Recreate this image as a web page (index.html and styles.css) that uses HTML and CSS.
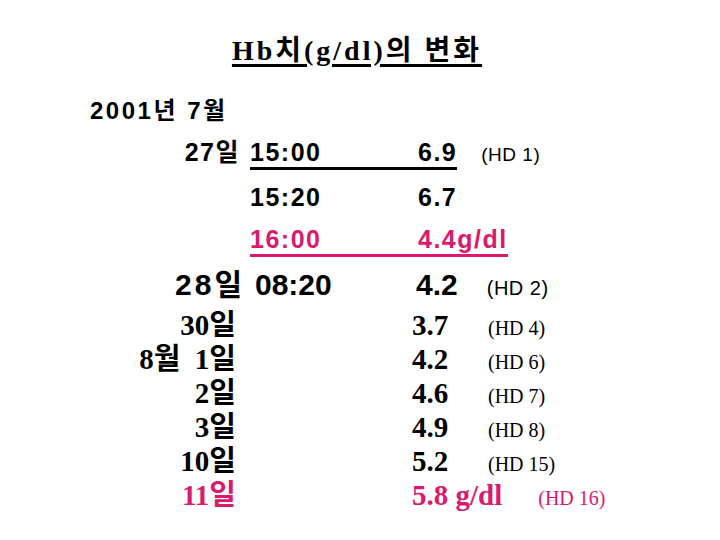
FILE: index.html
```html
<!DOCTYPE html>
<html>
<head>
<meta charset="UTF-8">
<title>Hb치의 변화</title>
<link rel="stylesheet" href="styles.css">
</head>
<body>

<div class="slide">

<h1 class="title"><span>Hb치(g/dl)의 변화</span></h1>

<!-- 7월 : 투석 당일 -->
<div class="sans">
  <div class="year">2001년 7월</div>

  <div class="row r1">
    <div class="date">27일</div>
    <div class="reading line">
      <span class="time">15:00</span>
      <span class="val">6.9</span>
    </div>
    <span class="hd">(HD 1)</span>
  </div>

  <div class="row r2">
    <div class="date">&nbsp;</div>
    <div class="reading">
      <span class="time">15:20</span>
      <span class="val">6.7</span>
    </div>
  </div>

  <div class="row r3 pink">
    <div class="date">&nbsp;</div>
    <div class="reading line">
      <span class="time">16:00</span>
      <span class="val">4.4g/dl</span>
    </div>
  </div>

  <div class="row big">
    <div class="date">28일</div>
    <div class="reading">
      <span class="time">08:20</span>
      <span class="val">4.2</span>
    </div>
    <span class="hd">(HD 2)</span>
  </div>
</div>

<!-- 이후 경과 -->
<div class="serif">
  <div class="row"><div class="date">30일</div><span class="val">3.7</span><span class="hd">(HD 4)</span></div>
  <div class="row"><div class="date">8월&nbsp; 1일</div><span class="val">4.2</span><span class="hd">(HD 6)</span></div>
  <div class="row"><div class="date">2일</div><span class="val">4.6</span><span class="hd">(HD 7)</span></div>
  <div class="row"><div class="date">3일</div><span class="val">4.9</span><span class="hd">(HD 8)</span></div>
  <div class="row"><div class="date">10일</div><span class="val">5.2</span><span class="hd">(HD 15)</span></div>
  <div class="row pink last"><div class="date">11일</div><span class="val">5.8 g/dl</span><span class="hd">(HD 16)</span></div>
</div>

</div>

</body>
</html>
```

FILE: styles.css
```css
body {
  margin: 0;
  background-color: #fff;
  color: #000;
}

.slide {
  width: 720px;
  height: 540px;
  box-sizing: border-box;
  padding-top: 34px;
}

.title {
  margin: 0;
  padding-right: 6px;
  text-align: center;
  font: bold 28px "Liberation Serif", "Noto Sans CJK KR", serif;
  letter-spacing: 3px;
  line-height: 34px;
}

.title span {
  text-decoration: underline;
  text-decoration-thickness: 3px;
  text-underline-offset: 4px;
}

.pink {
  color: #d91a6e;
}

/* upper block : Arial look, a bit wide */
.sans {
  margin-top: 22px;
  font-family: "Liberation Sans", "Noto Sans CJK KR", sans-serif;
  font-weight: bold;
}

.year {
  padding-left: 90px;
  font-size: 24px;
  letter-spacing: 2.5px;
  line-height: 41px;
}

.row {
  display: flex;
  align-items: baseline;
}

.sans .row {
  font-size: 25px;
  letter-spacing: 1.5px;
  height: 42px;
  line-height: 42px;
}

.sans .row.r1 {
  height: 45px;
}

.sans .date {
  width: 250px;
  padding-right: 10px;
  text-align: right;
  box-sizing: border-box;
}

.reading {
  display: flex;
  align-items: baseline;
}

.reading.line {
  line-height: 30px;
  border-bottom: 3px solid currentColor;
}

.sans .time {
  width: 168px;
}

.sans .hd {
  margin-left: 24px;
  font-weight: normal;
  font-size: 19px;
  letter-spacing: 0.5px;
}

.sans .row.big {
  font-size: 30px;
  letter-spacing: 0;
  height: 50px;
  line-height: 50px;
}

.sans .big .date {
  width: 255px;
  letter-spacing: 3px;
}

.sans .big .time {
  width: 161px;
}

.sans .big .hd {
  margin-left: 29px;
  font-size: 20px;
}

/* lower block : Times look */
.serif {
  margin-top: -2px;
  font-family: "Liberation Serif", "Noto Sans CJK KR", serif;
}

.serif .row {
  height: 34px;
  line-height: 34px;
}

.serif .date {
  width: 236px;
  text-align: right;
  font-weight: bold;
  font-size: 29px;
}

.serif .val {
  margin-left: 176px;
  min-width: 76px;
  font-weight: bold;
  font-size: 29px;
}

.serif .hd {
  font-size: 20px;
}

.serif .last .hd {
  margin-left: 36px;
}
```
